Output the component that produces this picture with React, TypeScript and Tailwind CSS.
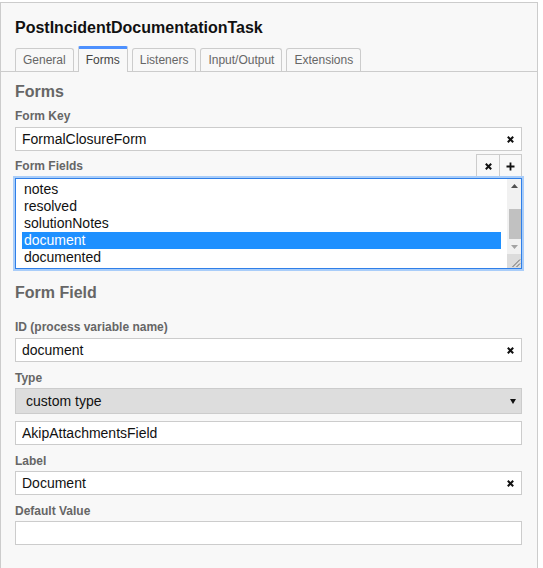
import React from "react";

const TABS = ["General", "Forms", "Listeners", "Input/Output", "Extensions"];
const FIELDS = ["notes", "resolved", "solutionNotes", "document", "documented"];

function ClearIcon() {
  return (
    <svg width="7" height="7" viewBox="0 0 7 7" className="shrink-0">
      <path d="M0.8 0.8L6.2 6.2M6.2 0.8L0.8 6.2" stroke="#111" strokeWidth="2" />
    </svg>
  );
}

function PlusIcon() {
  return (
    <svg width="9" height="9" viewBox="0 0 9 9">
      <path d="M4.5 0.5v8M0.5 4.5h8" stroke="#111" strokeWidth="1.8" />
    </svg>
  );
}

function Label({ children, className = "" }: { children: React.ReactNode; className?: string }) {
  return <div className={`text-[12px] font-bold leading-[14px] text-[#666] ${className}`}>{children}</div>;
}

function Header({ children, className = "" }: { children: React.ReactNode; className?: string }) {
  return <div className={`text-[16px] font-bold leading-[19px] text-[#666] ${className}`}>{children}</div>;
}

function TextInput({ value, clear, className = "mt-[4px]" }: { value: string; clear?: boolean; className?: string }) {
  return (
    <div
      className={`flex h-[24px] items-center border border-[#ccc] bg-white pl-[6px] pr-[7px] text-[14px] leading-[22px] text-[#111] ${className}`}
    >
      <span className="flex-1 truncate">{value}</span>
      {clear && <ClearIcon />}
    </div>
  );
}

export default function App() {
  return (
    <div className="h-screen overflow-hidden bg-white pt-[2px] font-['Liberation_Sans',Arial,sans-serif]">
      <div className="h-[566px] w-[538px] border border-b-0 border-[#ccc] bg-[#f8f8f8]">
        {/* Title */}
        <div className="pl-[14px] pt-[15px] text-[16px] font-bold leading-[19px] text-[#111]">
          PostIncidentDocumentationTask
        </div>

        {/* Tabs */}
        <div className="mt-[9px] flex items-end border-b border-[#ccc] pl-[14px]">
          {TABS.map((t) => {
            const active = t === "Forms";
            return active ? (
              <div
                key={t}
                className="relative mb-[-1px] mr-[4px] h-[26px] rounded-t-[2px] border-x border-t-[3px] border-[#ccc] border-t-[#4d90fe] bg-[#f8f8f8] px-[7px] text-[12px] leading-[22px] text-[#444]"
              >
                {t}
              </div>
            ) : (
              <div
                key={t}
                className="mr-[4px] h-[23px] rounded-t-[3px] border border-b-0 border-[#ccc] px-[7px] text-[12px] leading-[22px] text-[#666]"
              >
                {t}
              </div>
            );
          })}
        </div>

        <div className="pl-[14px] pr-[15px]">
          <Header className="mt-[10px]">Forms</Header>

          <Label className="mt-[8px]">Form Key</Label>
          <TextInput value="FormalClosureForm" clear className="mt-[4px]" />

          {/* Form fields list */}
          <div className="mt-[3px] flex h-[23px] items-end">
            <Label className="mb-[4px] flex-1">Form Fields</Label>
            <div className="flex h-[23px]">
              <button className="flex w-[23px] items-center justify-center border border-r-0 border-b-0 border-[#ccc]">
                <ClearIcon />
              </button>
              <button className="flex w-[23px] items-center justify-center border border-b-0 border-[#ccc]">
                <PlusIcon />
              </button>
            </div>
          </div>
          <div className="relative mt-[1px] flex h-[91px] border border-[#2f7fe8] bg-white shadow-[0_0_0_2px_#a9cdf9]">
            <div className="flex-1 px-[6px] pt-[2px] text-[14px] leading-[17px] text-[#111]">
              {FIELDS.map((f) => (
                <div
                  key={f}
                  className={`px-[2px] ${f === "document" ? "bg-[#1e90ff] text-white" : ""}`}
                >
                  {f}
                </div>
              ))}
            </div>
            <div className="flex w-[14px] flex-col bg-[#f1f1f1]">
              <div className="flex h-[14px] items-center justify-center">
                <svg width="7" height="4" viewBox="0 0 7 4">
                  <path d="M3.5 0L7 4H0z" fill="#505050" />
                </svg>
              </div>
              <div className="h-[47px] pl-[2px] pt-[16px]">
                <div className="h-[30px] w-[12px] bg-[#c1c1c1]" />
              </div>
              <div className="flex h-[14px] items-center justify-center">
                <svg width="7" height="4" viewBox="0 0 7 4">
                  <path d="M0 0H7L3.5 4z" fill="#a3a3a3" />
                </svg>
              </div>
              <div className="h-[14px] bg-[#dcdcdc]">
                <svg width="14" height="14" viewBox="0 0 14 14">
                  <path d="M13 5.5L5.5 13M13 9.5L9.5 13" stroke="#666" strokeWidth="1" />
                </svg>
              </div>
            </div>
          </div>

          <Header className="mt-[14px]">Form Field</Header>

          <Label className="mt-[18px]">ID (process variable name)</Label>
          <TextInput value="document" clear />

          <Label className="mt-[9px]">Type</Label>
          <div className="mt-[3px] flex h-[26px] items-center border border-[#ccc] bg-[#ddd] pl-[10px] pr-[5px] text-[14px] text-[#111]">
            <span className="flex-1">custom type</span>
            <svg width="6" height="5" viewBox="0 0 6 5">
              <path d="M0 0H6L3 5z" fill="#111" />
            </svg>
          </div>
          <TextInput value="AkipAttachmentsField" className="mt-[7px]" />

          <Label className="mt-[9px]">Label</Label>
          <TextInput value="Document" clear className="mt-[3px]" />

          <Label className="mt-[9px]">Default Value</Label>
          <TextInput value="" className="mt-[3px]" />
        </div>
      </div>
    </div>
  );
}
